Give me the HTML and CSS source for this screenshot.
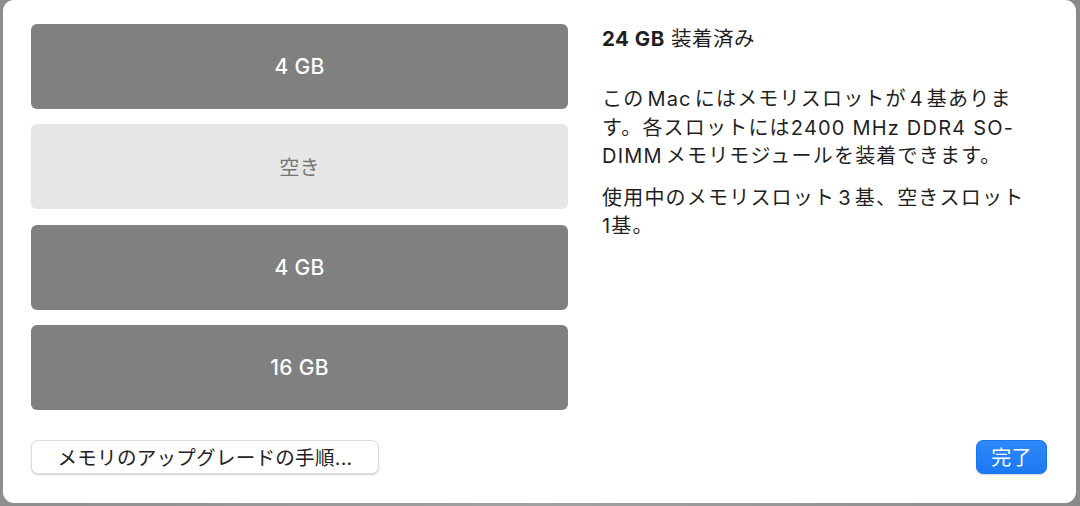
FILE: index.html
```html
<!DOCTYPE html>
<html lang="ja">
<head>
<meta charset="utf-8">
<link rel="stylesheet" href="styles.css">
</head>
<body>
<div class="window">
  <div class="main">
    <div class="slots">
      <div class="slot used">4 GB</div>
      <div class="slot empty">空き</div>
      <div class="slot used">4 GB</div>
      <div class="slot used">16 GB</div>
    </div>
    <div class="info">
      <div class="title"><b>24 GB</b> 装着済み</div>
      <p class="para">この<span class="lat">Mac</span>にはメモリスロットが<span class="lat">4</span>基ありま<br>す。各スロットには2400 MHz DDR4 SO-<br>DIMM<span class="gap"></span>メモリモジュールを装着できます。</p>
      <p class="para">使用中のメモリスロット<span class="lat">3</span>基、空きスロット<br>1基。</p>
    </div>
  </div>
  <div class="footer">
    <button class="btn">メモリのアップグレードの手順...</button>
    <button class="btn primary">完了</button>
  </div>
</div>
</body>
</html>
```

FILE: styles.css
```css
html, body {
  margin: 0;
  padding: 0;
  width: 1080px;
  height: 506px;
  overflow: hidden;
  background: linear-gradient(90deg, #8e8e8e, #a2a2a2 50%, #8a8a8a);
  font-family: "Inter", "Noto Sans CJK JP", sans-serif;
}
.window {
  margin-left: 3px;
  width: 1073px;
  height: 503px;
  background: #ffffff;
  border-radius: 11px;
  box-sizing: border-box;
  padding: 24px 29px 0 28px;
  display: flex;
  flex-direction: column;
}
.main {
  display: flex;
  gap: 34px;
}
.slots {
  width: 537px;
  display: flex;
  flex-direction: column;
  gap: 15.3px;
}
.slot {
  height: 85px;
  border-radius: 6px;
  display: flex;
  align-items: center;
  justify-content: center;
  font-size: 21px;
  font-weight: 500;
  letter-spacing: 0.3px;
}
.slot.used {
  background: #808080;
  color: #ffffff;
}
.slot.empty {
  background: #e6e6e6;
  color: #767676;
  font-size: 20px;
  font-weight: 400;
}
.info {
  flex: 1;
  color: #1f1f1f;
  font-size: 20px;
  letter-spacing: 1.2px;
}
.title {
  font-size: 20.5px;
  line-height: 32px;
  letter-spacing: 0.5px;
  margin-top: -1px;
}
.title b {
  font-weight: 700;
}
.para {
  margin: 0;
  line-height: 28.5px;
  white-space: nowrap;
}
.para:first-of-type {
  margin-top: 30px;
}
.para + .para {
  margin-top: 13px;
}
.lat {
  margin: 0 3px;
}
.gap {
  display: inline-block;
  width: 3px;
}
.footer {
  margin-top: 30px;
  display: flex;
  justify-content: space-between;
  align-items: center;
}
.btn {
  font-family: inherit;
  height: 34px;
  padding: 0;
  font-size: 19.5px;
  color: #222;
  background: #ffffff;
  border: 1px solid #dcdcdc;
  border-radius: 7px;
  box-shadow: 0 1px 1.5px rgba(0,0,0,0.18);
  letter-spacing: 0.3px;
}
.btn:first-child {
  width: 348px;
}
.btn.primary {
  width: 71px;
  font-size: 20px;
  color: #fff;
  background: linear-gradient(#2e88f8, #1b78f2);
  border: 1px solid #1a74ec;
}
```
